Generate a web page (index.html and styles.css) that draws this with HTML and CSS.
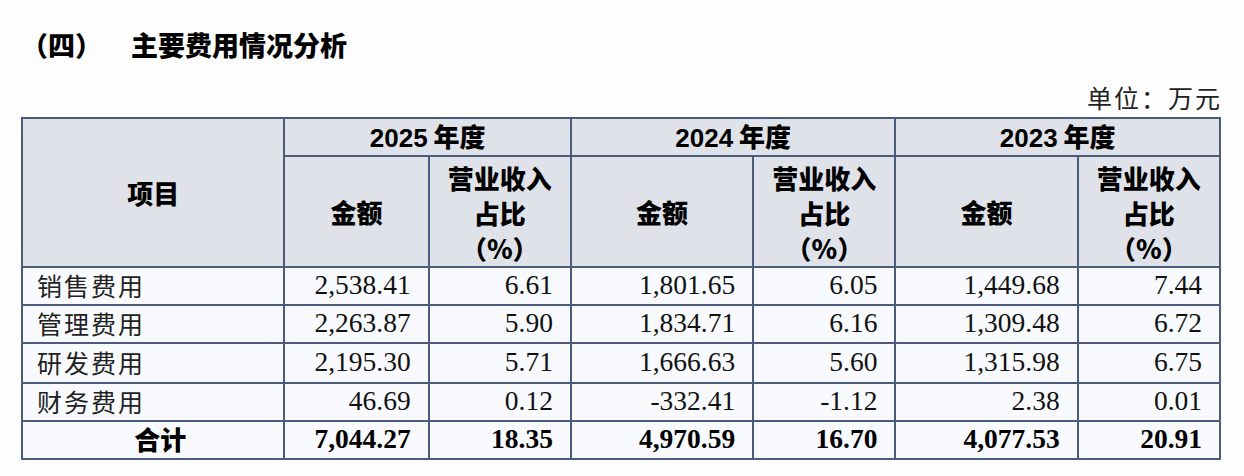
FILE: index.html
```html
<!DOCTYPE html>
<html lang="zh">
<head>
<meta charset="utf-8">
<title>主要费用情况分析</title>
<link rel="stylesheet" href="styles.css">
</head>
<body>
<div class="page">
  <h2 class="title"><span class="num">（四）</span>主要费用情况分析</h2>
  <div class="unit">单位：万元</div>
  <table class="fee">
    <colgroup>
      <col class="c-item">
      <col class="c-amt1">
      <col class="c-pct">
      <col class="c-amt">
      <col class="c-pct">
      <col class="c-amt">
      <col class="c-pct">
    </colgroup>
    <thead>
      <tr class="h1">
        <th rowspan="2" class="item">项目</th>
        <th colspan="2"><span class="yr">2025</span> 年度</th>
        <th colspan="2"><span class="yr">2024</span> 年度</th>
        <th colspan="2"><span class="yr">2023</span> 年度</th>
      </tr>
      <tr class="h2">
        <th>金额</th>
        <th class="pct">营业收入<br>占比<br>（%）</th>
        <th>金额</th>
        <th class="pct">营业收入<br>占比<br>（%）</th>
        <th>金额</th>
        <th class="pct">营业收入<br>占比<br>（%）</th>
      </tr>
    </thead>
    <tbody>
      <tr class="r">
        <td class="name">销售费用</td>
        <td>2,538.41</td><td>6.61</td>
        <td>1,801.65</td><td>6.05</td>
        <td>1,449.68</td><td>7.44</td>
      </tr>
      <tr class="r">
        <td class="name">管理费用</td>
        <td>2,263.87</td><td>5.90</td>
        <td>1,834.71</td><td>6.16</td>
        <td>1,309.48</td><td>6.72</td>
      </tr>
      <tr class="r tall">
        <td class="name">研发费用</td>
        <td>2,195.30</td><td>5.71</td>
        <td>1,666.63</td><td>5.60</td>
        <td>1,315.98</td><td>6.75</td>
      </tr>
      <tr class="r">
        <td class="name">财务费用</td>
        <td>46.69</td><td>0.12</td>
        <td>-332.41</td><td>-1.12</td>
        <td>2.38</td><td>0.01</td>
      </tr>
      <tr class="r total">
        <td class="name">合计</td>
        <td>7,044.27</td><td>18.35</td>
        <td>4,970.59</td><td>16.70</td>
        <td>4,077.53</td><td>20.91</td>
      </tr>
    </tbody>
  </table>
</div>
</body>
</html>
```

FILE: styles.css
```css
html, body {
  margin: 0;
  padding: 0;
  background: #fdfdfe;
}
.page {
  padding: 30px 0 0 21px;
  width: 1201px;
  color: #111;
  font-family: "Noto Sans CJK SC", sans-serif;
}
.title {
  margin: 0;
  font-size: 27px;
  line-height: 30px;
  font-weight: 900;
  color: #000;
}
.title .num {
  margin-right: 29px;
}
.unit {
  margin-top: 22px;
  text-align: right;
  font-size: 25px;
  letter-spacing: 2px;
  line-height: 30px;
  font-weight: 400;
  color: #222;
}
.fee {
  margin-top: 5px;
  width: 1200px;
  table-layout: fixed;
  border-collapse: collapse;
  border: 2px solid #4b5b7c;
}
.c-item { width: 262px; }
.c-amt1 { width: 144px; }
.c-amt { width: 182px; }
.c-pct { width: 142px; }
.fee th, .fee td {
  border: 2px solid #4b5b7c;
  padding: 0;
}
.fee th {
  background: #dfe3e9;
  font-family: "Noto Sans CJK SC", sans-serif;
  font-weight: 900;
  font-size: 26px;
  color: #000;
  text-align: center;
  vertical-align: middle;
}
.fee .yr {
  font-family: "Liberation Sans", "Noto Sans CJK SC", sans-serif;
  font-weight: 700;
}
.h1 { height: 37px; }
.h1 th { line-height: 34px; }
.h2 { height: 111px; }
.fee th.pct {
  line-height: 35px;
  padding-top: 2px;
}
.fee td {
  background: #f8fafd;
  font-family: "Liberation Serif", serif;
  font-size: 27.5px;
  text-align: right;
  padding: 0 17px 3px 0;
  line-height: 30px;
  color: #111;
}
.r { height: 38px; }
.r.tall { height: 40px; }
.fee td.name {
  font-family: "Noto Sans CJK SC", sans-serif;
  font-size: 25px;
  font-weight: 400;
  letter-spacing: 2px;
  text-align: left;
  padding-left: 14px;
  padding-right: 0;
  color: #222;
}
.total td {
  font-weight: 700;
  color: #000;
}
.total td.name {
  font-weight: 900;
  text-align: center;
  letter-spacing: 0;
  font-size: 26px;
  color: #000;
}
```
